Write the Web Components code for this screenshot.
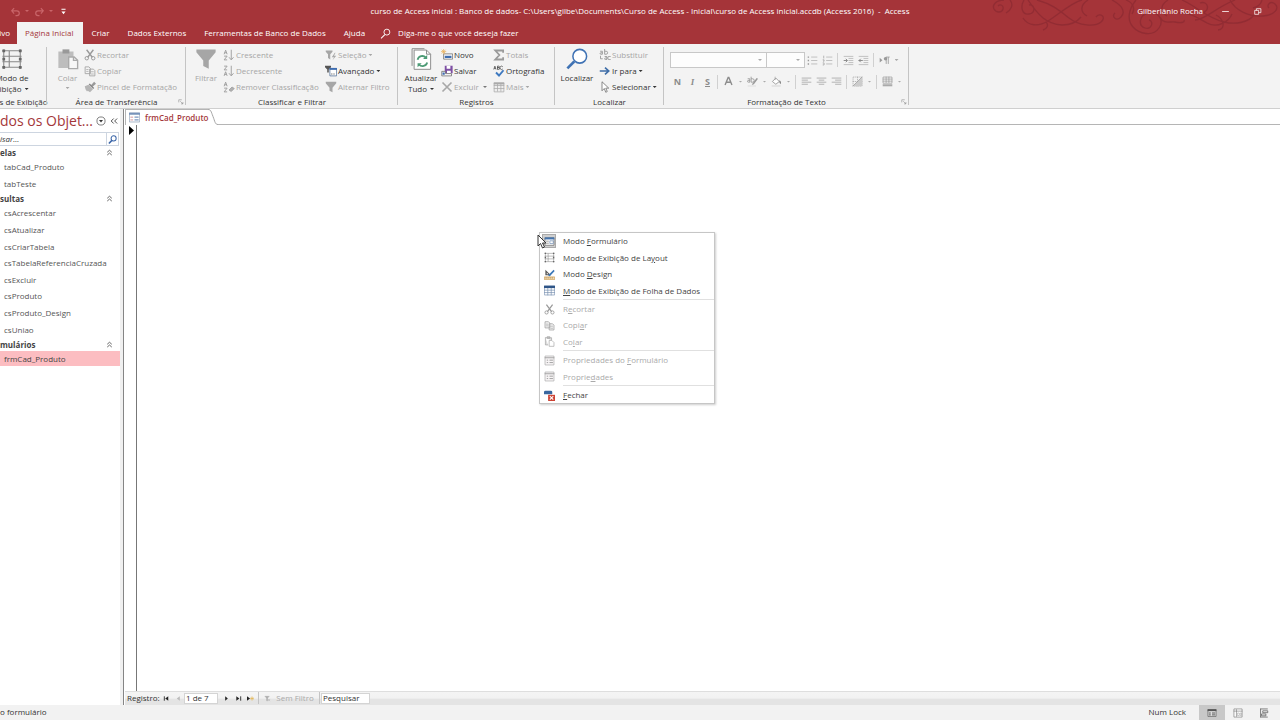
<!DOCTYPE html>
<html lang="pt-BR">
<head>
<meta charset="utf-8">
<title>Access</title>
<style>
html,body{margin:0;height:100%}
body{font:8px/12px "Open Sans","Noto Sans",sans-serif;color:#333;overflow:hidden;background:#fff}
</style>
</head>
<body>
<access-app></access-app>
<script>
const ICONS = {
 undo:'<path d="M3 7h7a3 3 0 0 1 0 7H8M6 3 2.500 7 6 11" fill="none" stroke="#c9656a" stroke-width="1.700"/>',
 redo:'<path d="M13 7H6a3 3 0 0 0 0 7h2M10 3l3.500 4L10 11" fill="none" stroke="#c9656a" stroke-width="1.700"/>',
 custom:'<path d="M5 4h6v1.500H5zM5 8h6l-3 4z" fill="#fff"/>',
 minimize:'<path d="M2 8h12" stroke="#fff" stroke-width="1.400"/>',
 restore:'<path d="M3 6h7v7H3zM6 6V3h8v7h-4" fill="none" stroke="#fff" stroke-width="1.300"/>',
 lens:'<circle cx="10" cy="6" r="4.300" fill="none" stroke="currentColor" stroke-width="1.300"/><path d="M7 9.500 1.500 15" stroke="currentColor" stroke-width="1.500"/>',
 lensbold:'<circle cx="10" cy="6" r="4.500" fill="none" stroke="currentColor" stroke-width="1.800"/><path d="M7 9.500 1.500 15" stroke="currentColor" stroke-width="2.800"/>',
 layout:'<path d="M2 1v14M14 1v14M1 2h14M1 6h14M1 10h14M1 14h14M6 2v12" fill="none" stroke="#888" stroke-width=".8"/><path d="M1 1h2v2H1zM13 1h2v2h-2zM1 13h2v2H1zM13 13h2v2h-2zM1 7h2v2H1zM13 7h2v2h-2z" fill="#666"/>',
 paste:'<path d="M1 2.500h11V7H9v7.500H1z" fill="#bdbdbd"/><path d="M4 1h5v3H4z" fill="#999"/><path d="M8.500 6.500h4l2.500 2.500v6H8.500z" fill="#f7f7f7" stroke="#aaa"/><path d="M12 6.500V9h3" fill="none" stroke="#aaa"/>',
 cut:'<path d="M3.500 1 11 11M12.500 1 5 11" stroke="#999" stroke-width="1.800"/><circle cx="3.700" cy="12.300" r="2.300" fill="none" stroke="#999" stroke-width="1.300"/><circle cx="12.300" cy="12.300" r="2.300" fill="none" stroke="#999" stroke-width="1.300"/>',
 copy:'<path d="M1.500 2.500h5l2 2v7h-7zM7.500 5.500h5l2 2v7h-7z" fill="#f4f4f4" stroke="#a5a5a5" stroke-width="1.200"/><path d="M3 6h3M3 8.500h3M9 9h4M9 12h4" stroke="#a5a5a5"/>',
 brush:'<path d="m9 6 4.500-5 2.500 2.500-5 4.500z" fill="#999"/><path d="m1 7 5-2 6 6-4 4-3-2-1 1-2-3z" fill="#b5b5b5"/><path d="m7 4 6 6" stroke="#888" stroke-width="2"/>',
 filter:'<path d="M1 1h14v2L10 9v6l-4-2V9L1 3z" fill="#a6a6a6"/>',
 asc:'<g stroke="#a0a0a0" fill="none" stroke-width="1.300"><path d="m1.500 7 2-5.500L5.500 7M2 5h3M1.500 9.500h4l-4 5h4M11 1v13M8 11l3 3.500 3-3.500"/></g>',
 desc:'<g stroke="#a0a0a0" fill="none" stroke-width="1.300"><path d="M1.500 1.500h4l-4 5h4M1.500 14.500l2-5.500 2 5.500M2 12.500h3M11 1v13M8 11l3 3.500 3-3.500"/></g>',
 clearsort:'<g stroke="#a0a0a0" fill="none" stroke-width="1.300"><path d="m1.500 7 2-5.500L5.500 7M2 5h3M1.500 9.500h4l-4 5h4"/></g><path d="m8 12 4-4 3 2-4 4z" fill="#b0b0b0" stroke="#999"/>',
 selfilter:'<path d="M1 2h9v1.500L7 7v7l-3-2V7L1 3.500z" fill="#a6a6a6"/><path d="m13 5-4 6h3l-2 4 5-6h-3l2-4z" fill="#aaa"/>',
 advanced:'<path d="M0 1h8v2L5 6v4H3V6L0 3z" fill="#555"/><path d="M6.500 4.500h9v10h-9z" fill="#fff" stroke="#4c6a91"/><path d="M6 4h10v2.500H6z" fill="#3e6db0"/><path d="M8 12h6" stroke="#555" stroke-dasharray="2 1"/>',
 refresh:'<path d="M3 1.500h9l3 3v11H3z" fill="#fff" stroke="#8a8a8a" stroke-width=".7"/><path d="M1.500 13V.5h9M12 1.500v3h3" fill="none" stroke="#8a8a8a" stroke-width=".7"/><path d="M5.500 8.500a3.500 3.500 0 0 1 6-1.500M12.500 10.500a3.500 3.500 0 0 1-6 1.500" fill="none" stroke="#4d9b76" stroke-width="1.300"/><path d="M12.500 5v3h-3zM5.500 14v-3h3z" fill="#4d9b76"/>',
 novo:'<path d="M3.500 6.500h12v7h-12z" fill="#fff" stroke="#666"/><path d="M5 9h9v3H5z" fill="#3e6db0"/><path d="M3.500 0v7M0 3.500h7M1 1l5 5M6 1 1 6" stroke="#e8b25b"/>',
 save:'<path d="M5 1h10.500v10H5z" fill="#7d4fa3"/><path d="M7.500 1h5v4h-5zM8 7.500h5V11H8z" fill="#fff"/><path d="M1 8.500h5v3h8v3H1z" fill="#fff" stroke="#666"/><path d="M2 10h3v3H2z" fill="#3e6db0"/>',
 del:'<path d="m2 2 12 12M14 2 2 14" stroke="#a8a8a8" stroke-width="2.200"/>',
 sigma:'<path d="M13.500 5V2H3l5.500 6L3 14h10.500v-3" fill="none" stroke="#9a9a9a" stroke-width="2.400"/>',
 spell:'<g fill="none" stroke="#444"><path d="m1 6 1.500-4.500L4 6M1.500 4.500h2M6 1.500V6h1.500a1 1 0 0 0 0-2.500H6h1.500a1 1 0 0 0 0-2H6M13 2.300A2.200 2.200 0 1 0 13 5.300"/></g><path d="m4 10 4 4 6-7" fill="none" stroke="#3e79c0" stroke-width="2.500"/>',
 more:'<path d="M1.500 2.500h13v12h-13zM1 6h14M1 10h14M6 3v11M10.500 3v11" fill="#eee" stroke="#aaa"/><path d="M1 2h14v2.500H1z" fill="#aaa"/>',
 find:'<circle cx="10" cy="6" r="5" fill="#fff" stroke="#3f72b4" stroke-width="1.100"/><path d="m6 9.800-5 5" stroke="#3f72b4" stroke-width="1.900"/>',
 replace:'<g fill="none" stroke="#999" stroke-width="1.200"><path d="M1.500 3h3v4h-2a1 1 0 0 1 0-2h2M7.500 0v7h2a1.500 1.500 0 0 0 0-4h-2M7.500 10h3v4h-2a1 1 0 0 1 0-2h2M15.500 10h-2a2 2 0 0 0 0 4h2M2 9v4h3"/></g>',
 goto:'<path d="M1 8h11M8 3.500 13 8l-5 4.500" fill="none" stroke="#3f6ea8" stroke-width="2.200"/>',
 pointer:'<path d="M4 1v12l3-3 2 5 2-1-2-4.500h4z" fill="#fff" stroke="#666"/>',
 bullets:'<path d="M6 3h9M6 8h9M6 13h9" stroke="#aaa"/><path d="M1 2h2v2H1zM1 7h2v2H1zM1 12h2v2H1z" fill="#999"/>',
 numbers:'<path d="M6 3h9M6 8h9M6 13h9" stroke="#aaa"/><path d="M2.500 1v4M1 7h2v2H1.500M1 11.500h2v3H1" fill="none" stroke="#999"/>',
 indent:'<path d="M1 2h14M8 5h7M8 8h7M8 11h7M1 14h14" stroke="#aaa"/><path d="M1 8h5M4 5.500 6.500 8 4 10.500" fill="none" stroke="#888" stroke-width="1.400"/>',
 outdent:'<path d="M1 2h14M8 5h7M8 8h7M8 11h7M1 14h14" stroke="#aaa"/><path d="M1 8h6M4 5.500 1.500 8 4 10.500" fill="none" stroke="#888" stroke-width="1.400"/>',
 para:'<path d="M1 4v7l4-3.500z" fill="#999"/><path d="M10.500 13V3M13.500 13V3M15.500 3H10" fill="none" stroke="#999" stroke-width="1.200"/><circle cx="9.500" cy="5.500" r="2.500" fill="#999"/>',
 fontcolor:'<path d="m3 13 4.500-11h1L13 13M5 9h6" fill="none" stroke="#8c8c8c" stroke-width="2"/>',
 highlight:'<path d="M1 4h3v5H2a1 1 0 0 1 0-2.500h2M6 1v8h2a1.500 1.500 0 0 0 0-5H6" fill="none" stroke="#999" stroke-width="1.300"/><path d="m8 11 6-8 2 1-6 8-3 1z" fill="#999"/><path d="M1 13.500h12v2H1z" fill="#e4e4e4"/>',
 fill:'<path d="m2 8 5-5 5 5-5 4z" fill="#fff" stroke="#999" stroke-width="1.300"/><path d="M6 1v5" stroke="#999"/><path d="M12 6c3 1 3 4 2 6l-2-3z" fill="#888"/><path d="M1 13.500h13v2H1z" fill="#dcdcdc"/>',
 left:'<path d="M1 3h14M1 6h9M1 9h14M1 12h9" stroke="#a5a5a5" stroke-width="1.200"/>',
 center:'<path d="M1 3h14M4 6h8M1 9h14M4 12h8" stroke="#a5a5a5" stroke-width="1.200"/>',
 right:'<path d="M1 3h14M6 6h9M1 9h14M6 12h9" stroke="#a5a5a5" stroke-width="1.200"/>',
 grid:'<path d="M1.500 1.500h13v13h-13zM1 8h14M8 1v14" fill="none" stroke="#a5a5a5" stroke-dasharray="2 1"/><path d="M1 15 15 1v14z" fill="#ccc"/><path d="M1 15 15 1" stroke="#999"/>',
 altrows:'<path d="M1.500 1.500h13v9h-13zM1 4.500h14M1 7.500h14M6 1v9M10 1v9" fill="none" stroke="#999"/><path d="M1 12h14v3H1z" fill="#aaa"/>',
 launcher:'<path d="M2 9V2h8M6 6l7 7M13 8v5H8" fill="none" stroke="currentColor" stroke-width="1.500"/>',
 circle:'<circle cx="8" cy="8" r="6.500" fill="none" stroke="#555" stroke-width="1.200"/><path d="M4.800 6.500h6.400L8 10.500z" fill="#333"/>',
 collapse:'<path d="m7.500 4-4 4 4 4M13 4 9 8l4 4" fill="none" stroke="#444" stroke-width="1.500"/>',
 up:'<path d="M4 7.500 8 4l4 3.500M4 12.500 8 9l4 3.500" fill="none" stroke="#555" stroke-width="1.600"/>',
 form:'<path d="M.5 1.500h15v13H.5z" fill="#fff" stroke="#8698b0"/><path d="M0 1h16v3H0z" fill="#7793ba"/><path d="M2 7.500h4M2 11.500h4" stroke="#d08a92" stroke-width="1.300"/><path d="M8 6.500h6v2H8zM8 10.500h6v2H8z" fill="#7c98c0"/>',
 formview:'<path d="M1.500 2.500h13v11h-13z" fill="#fff" stroke="#666"/><path d="M1 2h14v3H1z" fill="#4474ae"/><path d="M3 7.500h4M3 10.500h4" stroke="#777"/><path d="M8.500 7h5v4h-5z" fill="none" stroke="#6d8bb2"/>',
 design:'<path d="M2 1v8h8z" fill="#555"/><path d="M4 5v2.500h2.500z" fill="#fff"/><path d="m6 9 8-8 1.500 2L8 11z" fill="#3b77b8"/><path d="M.5 11.500h15v4H.5z" fill="#f3ddb5" stroke="#c99a55"/><path d="M3 12v2M6 12v2M9 12v2M12 12v2" stroke="#a67835"/>',
 sheet:'<path d="M.5 1.500h15v13H.5zM0 7.500h16M0 11h16M5.500 4v11M10.500 4v11" fill="#fff" stroke="#7890b0"/><path d="M0 1h16v3.500H0z" fill="#2e5587"/>',
 props:'<path d="M1.500 1.500h13v13h-13z" fill="#f8f5f6" stroke="#aaa"/><path d="M1 4h14M4 7.500h2M8 7.500h5M4 11h2M8 11h5" stroke="#999" stroke-width="1.300"/>',
 pastesm:'<path d="M2 2.500h9V6M2 2v11h4M4.500 1h4v2.500h-4z" fill="#ddd" stroke="#a5a5a5"/><path d="M7.500 6.500h4l3 3v5.500h-7z" fill="#fff" stroke="#a5a5a5"/>',
 close:'<path d="M0 3q0-2 2-2h8q2 0 2 2v3H0z" fill="#3a679f"/><path d="M6 7h10v9H6z" fill="#cd4334"/><path d="m8.500 9 5 5M13.500 9l-5 5" stroke="#fff" stroke-width="1.600"/>',
 first:'<path d="M3 3v10" stroke="#222" stroke-width="2"/><path d="M12 3v10L5 8z" fill="#222"/>',
 prev:'<path d="M11 3v10L4 8z" fill="#bbb"/>',
 next:'<path d="M5 3v10l6-5z" fill="#222"/>',
 last:'<path d="M13 3v10" stroke="#222" stroke-width="2"/><path d="M3 3v10l7-5z" fill="#222"/>',
 newrec:'<path d="M0 3v10l7-5z" fill="#222"/><path d="M11.500 3v10M7 8h9M8.500 5l6 6M14.500 5l-6 6" stroke="#e2b24b" stroke-width="1.300"/>',
 nofilter:'<path d="M2 3h10L8 7v6H6V7zM9 9l5 5M14 9l-5 5" fill="#aaa" stroke="#aaa"/>',
 stForm:'<path d="M1.500 2.500h13v11h-13z" fill="#ddd" stroke="#555"/><path d="M1 2h14v3H1z" fill="#555"/><path d="M3 8h3M3 11h3M8 8h5M8 11h5" stroke="#555" stroke-width="1.500"/>',
 stSheet:'<path d="M1.500 1.500h13v13h-13zM5.500 2v12M1 5h14" fill="#fff" stroke="#777"/><path d="M7 8h3v4H7zM11.500 8h2v4h-2z" fill="none" stroke="#aaa"/>',
 stLayout:'<path d="M2 1.500h12M2 14.500h12M2.500 1v14M6 4.500h8v3H6zM4 9.500h7v3H4z" fill="none" stroke="#666" stroke-width="1.300"/>'
};
const define = (name, html, setup) => {
  const template = document.createElement('template');
  template.innerHTML = html;
  customElements.define(name, class extends HTMLElement {
    constructor() {
      super();
      this.attachShadow({mode: 'open'}).append(template.content.cloneNode(true));
    }
    connectedCallback() { if (setup) setup(this, this.shadowRoot); }
  });
};
const RESET = ':host,*{box-sizing:border-box}button,input,select{font:inherit;color:inherit;margin:0;padding:0;border:0;background:none;border-radius:0;outline:0}button{display:flex;align-items:center;justify-content:center;white-space:nowrap}';

define('ui-icon', `<style>:host{display:block;flex:none;width:var(--size,12px);height:var(--size,12px)}svg{display:block;width:100%;height:100%}</style><svg viewBox="0 0 16 16" aria-hidden="true"></svg>`,
  (el, root) => { root.querySelector('svg').innerHTML = ICONS[el.getAttribute('name')]; });

define('menu-arrow', `<style>:host{display:block;flex:none;width:4px;height:2px;background:currentColor;clip-path:polygon(0 0,100% 0,50% 100%)}</style>`);

/* Ribbon button: a wide row by default, icon over text with size="big" */
define('ribbon-button', `<style>${RESET}
:host{display:block}
button{height:16px;gap:1px;justify-content:flex-start}
button:disabled{color:#a6a6a6}
:host([size=big]) button{flex-direction:column;height:48px;width:100%;gap:0;line-height:11px;padding-top:1px;justify-content:flex-start}
:host([size=big]) ui-icon{--size:22px;margin-bottom:2px}
.label{display:flex;align-items:center;gap:2px}
:host([size=big]) .label{flex-direction:column;gap:0}
:host([size=big]) .lines{display:block}
:host([size=big]) menu-arrow{margin-top:4px}
</style><button type="button"><ui-icon></ui-icon><span class="label"><span class="lines"><slot></slot></span></span></button>`,
  (el, root) => {
    const icon = root.querySelector('ui-icon');
    icon.setAttribute('name', el.getAttribute('icon'));
    icon.shadowRoot.querySelector('svg').innerHTML = ICONS[el.getAttribute('icon')];
    root.querySelector('button').disabled = el.hasAttribute('disabled');
    if (el.hasAttribute('menu')) root.querySelector('.label').append(document.createElement('menu-arrow'));
  });

define('ribbon-group', `<style>${RESET}
:host{display:flex;flex-direction:column;flex:none;position:relative;padding-top:3px}
:host::after{content:"";position:absolute;right:0;top:3px;bottom:3px;width:1px;background:#c4c4c4}
.body{display:flex;height:48px}
footer{display:flex;justify-content:center;align-items:center;height:13px;white-space:nowrap}
button{position:absolute;right:2px;bottom:3px;color:#888}
ui-icon{--size:6px}
</style><div class="body"><slot></slot></div><footer><span></span></footer>`,
  (el, root) => {
    root.querySelector('footer span').textContent = el.getAttribute('label');
    if (el.hasAttribute('launcher')) root.querySelector('footer').insertAdjacentHTML('beforeend', '<button type="button" aria-label="Mais opções"><ui-icon name="launcher"></ui-icon></button>');
  });

define('tool-button', `<style>${RESET}:host{display:flex;flex:none}button{width:15px;height:16px;color:#8c8c8c;font-weight:700;font-size:9px}button.drop{width:9px;color:#aaa}ui-icon{--size:11px}</style>
<button type="button"><slot></slot></button>`,
  (el, root) => {
    const b = root.querySelector('button'), icon = el.getAttribute('icon');
    b.setAttribute('aria-label', el.getAttribute('label') || icon || '');
    if (icon) b.innerHTML = `<ui-icon name="${icon}"></ui-icon>`;
    if (el.hasAttribute('menu')) root.append(Object.assign(document.createElement('button'), {className: 'drop', type: 'button', innerHTML: '<menu-arrow></menu-arrow>'}));
  });

define('format-tools', `<style>${RESET}
:host{display:flex;flex-direction:column;gap:6px;padding:5px 0 0 6px}
.row{display:flex;height:16px;align-items:center}
.row+.row{height:15px}
label{display:flex;align-items:center;width:97px;height:16px;background:#fdfdfd;border:1px solid #c8c8c8;color:#aaa;padding-right:4px}
label+label{width:39px;margin-left:-1px}
select{appearance:none;flex:1;min-width:0;height:14px}
hr{width:1px;height:14px;margin:0 3px 0 2px;border:0;background:#d0d0d0}
i{font-family:"Liberation Serif",serif}
</style>
<div class="row"><label><select aria-label="Fonte"></select><menu-arrow></menu-arrow></label><label><select aria-label="Tamanho da fonte"></select><menu-arrow></menu-arrow></label>
<tool-button icon="bullets"></tool-button><tool-button icon="numbers"></tool-button><hr><tool-button icon="indent"></tool-button><tool-button icon="outdent"></tool-button><hr><tool-button icon="para" menu></tool-button></div>
<div class="row"><tool-button label="Negrito">N</tool-button><tool-button label="Itálico"><i>I</i></tool-button><tool-button label="Sublinhado"><u>S</u></tool-button><hr><tool-button icon="fontcolor" menu></tool-button><tool-button icon="highlight" menu></tool-button><tool-button icon="fill" menu></tool-button><hr><tool-button icon="left"></tool-button><tool-button icon="center"></tool-button><tool-button icon="right"></tool-button><hr><tool-button icon="grid" menu></tool-button><hr><tool-button icon="altrows" menu></tool-button></div>`);

define('title-bar', `<style>${RESET}
:host{display:grid;grid-template-columns:1fr auto 1fr;align-items:center;height:22px;color:#fff}
.quick,.window{display:flex;align-items:center}
.quick{padding-left:8px}
.quick button{height:14px;width:14px}
.quick .drop{width:10px;color:#c9656a}
.window{justify-content:flex-end;padding-right:7px}
.window button{width:32px;height:22px}
ui-icon{--size:11px}
h1{font:inherit;margin:0;white-space:pre}
.window span{margin-right:6px}
.window ui-icon{--size:9px}
</style>
<div class="quick"><button aria-label="Desfazer"><ui-icon name="undo"></ui-icon></button><button class="drop" aria-label="Lista desfazer"><menu-arrow></menu-arrow></button><button aria-label="Refazer"><ui-icon name="redo"></ui-icon></button><button class="drop" aria-label="Lista refazer"><menu-arrow></menu-arrow></button><button aria-label="Personalizar"><ui-icon name="custom"></ui-icon></button></div>
<h1>curso de Access inicial : Banco de dados- C:\\Users\\gilbe\\Documents\\Curso de Access - Inicial\\curso de Access inicial.accdb (Access 2016)  -  Access</h1>
<div class="window"><span>Gilberlânio Rocha</span><button aria-label="Minimizar"><ui-icon name="minimize"></ui-icon></button><button aria-label="Restaurar"><ui-icon name="restore"></ui-icon></button></div>`);

define('ribbon-tabs', `<style>${RESET}
:host{display:flex;height:22px;color:#fff}
nav{display:flex}
button{height:22px;padding:0 9px}
.file{width:17px;padding:0 7px 0 0;justify-content:flex-end}
[aria-selected=true]{background:#f3f3f3;color:#a4373a;padding:0 9px 0 8px}
label{display:flex;align-items:center;gap:7px;margin-left:6px;height:22px}
input{width:130px}
input::placeholder{color:#fff;opacity:1}
ui-icon{--size:11px}
</style>
<nav role="tablist"><button role="tab" class="file">ivo</button><button role="tab" aria-selected="true">Página Inicial</button><button role="tab">Criar</button><button role="tab">Dados Externos</button><button role="tab">Ferramentas de Banco de Dados</button><button role="tab">Ajuda</button></nav>
<label><ui-icon name="lens"></ui-icon><input aria-label="Diga-me" placeholder="Diga-me o que você deseja fazer"></label>`);

define('app-header', `<style>
:host{display:block;position:relative;background:#a53439}
.art{position:absolute;right:0;top:0;width:290px;height:38px;opacity:.75}
.front{position:relative}
</style>
<svg class="art" viewBox="0 0 290 38" fill="none" stroke="#8c2a32" stroke-width="1.300" aria-hidden="true">
<path d="M14 0c-8 0-12 5-10 9s8 4 9 0-3-5-5-3M20 0c4 5 1 10-4 13M34 0c-4 7-2 15 5 14s6-10 0-9M38 0c10 15 18 24 34 25 9 0 15-3 19-8M33 18c5 8 15 9 25 3S82 2 92 0M53 30c4-1 6-5 3-8M47 0c15 4 22 10 32 18s26 9 32 4-1-10-5-5M98 0c-8 5-8 12-1 16M122 0c10 5 14 12 9 17s-10-1-6-4M136 0c6 2 10 8 6 14"/>
<path d="M146 0c-8 10-9 20-3 27s20 10 26 1-2-17-11-15-10 13-3 15 9-7 4-8M170 17c4 8 10 4 15 5s10 1 9-2M178 0c-8 5-8 12-1 16M186 13c14-1 20 4 31 10s22-2 25-9M192 0c14 6 25 18 42 22 12 3 25 0 30-7M205 20c10 0 20-12 40-20M210 3c8-3 11 8 2 10M226 15c8 4 10 14 2 15M240 0c5 10 18 17 33 16 12-1 17-8 12-12s-9 2-6 4M272 0c-1 4-5 7-9 8"/>
</svg><div class="front"><slot></slot></div>`);

define('nav-section', `<style>${RESET}
:host{display:block}
h3{display:flex;justify-content:space-between;align-items:center;height:13px;margin:0;padding-right:6px;font-size:8px;font-weight:700;color:#444}
h3 button{height:13px}
ui-icon{--size:9px}
ul{display:grid;grid-auto-rows:1fr;height:var(--list);margin:0;padding:0;list-style:none}
li{display:flex;align-items:center;padding-left:4px;color:#555}
li.on{background:#fcbdc1;color:#444}
</style><h3><span></span><button aria-label="Recolher grupo"><ui-icon name="up"></ui-icon></button></h3><ul></ul>`,
  (el, root) => {
    root.querySelector('span').textContent = el.getAttribute('heading');
    root.querySelector('ul').innerHTML = el.getAttribute('items').split(' ').map(t => `<li class="${el.hasAttribute('selected') ? 'on' : ''}">${t}</li>`).join('');
  });

define('nav-pane', `<style>${RESET}
:host{display:flex;flex-direction:column;width:124px;flex:none;padding-right:3px;border-right:1px solid #858585;background:linear-gradient(#f0f0f0,#f0f0f0) right/3px 100% no-repeat #fff}
header{display:flex;align-items:center;height:23px;color:#a4373a}
h2{flex:none;width:94px;margin:0;font-size:14px;font-weight:400;line-height:22px;white-space:nowrap}
header button{height:16px;flex:1}
header ui-icon{--size:10px}
form{display:flex;height:14px;border:1px solid #cdd5e0;border-left:0;margin:0 1px 0 0}
input{flex:1;min-width:0;font-style:italic}
input::placeholder{color:#333;opacity:1}
form button{width:12px;color:#3a65a8;border-left:1px solid #cdd5e0}
form ui-icon{--size:9px}
</style>
<header><h2>dos os Objet...</h2><button aria-label="Filtrar lista"><ui-icon name="circle"></ui-icon></button><button aria-label="Recolher painel"><ui-icon name="collapse"></ui-icon></button></header>
<form><input aria-label="Pesquisar objetos" placeholder="isar..."><button type="button" aria-label="Pesquisar"><ui-icon name="lensbold"></ui-icon></button></form>
<nav-section heading="elas" style="--list:33px" items="tabCad_Produto tabTeste"></nav-section>
<nav-section heading="sultas" style="--list:133px" items="csAcrescentar csAtualizar csCriarTabela csTabelaReferenciaCruzada csExcluir csProduto csProduto_Design csUniao"></nav-section>
<nav-section heading="mulários" style="--list:15px" selected items="frmCad_Produto"></nav-section>`);

define('document-tabs', `<style>${RESET}
:host{display:flex;height:16px}
button{height:16px;gap:5px;padding-left:3px;border-top:1px solid #b5b5b5;border-left:1px solid #b5b5b5;font-weight:600;color:#a4373a;background:#fff}
svg{display:block;width:10px;height:16px}
.rest{flex:1;border-bottom:1px solid #b5b5b5}
ui-icon{--size:11px}
</style><button role="tab"><ui-icon name="form"></ui-icon><slot></slot></button><svg viewBox="0 0 10 16" aria-hidden="true"><path d="M0 .5c3 0 3 2 5 7s2 8 5 8" fill="none" stroke="#a5a5a5"/></svg><div class="rest"></div>`);

define('record-nav', `<style>${RESET}
:host{display:flex;align-items:center;height:14px;background:linear-gradient(#dedede 1px,#f4f4f4 1px,#f2f2f2 50%,#e4e4e4 60%);padding-left:2px;color:#333}
.step{width:12px;height:12px}
ui-icon{--size:7px}
input{height:11px;background:#fff;border:1px solid #d4d4d4;padding-left:1px}
.pos{width:34px;margin-right:2px}
.find{width:49px}
.filter{gap:5px;width:62px;color:#aaa;border-left:1px solid #c4c4c4;border-right:1px solid #c4c4c4;height:12px;margin:0 1px 0 2px}
label{width:33px}
</style><label for="pos">Registro:</label><button class="step" aria-label="Primeiro"><ui-icon name="first"></ui-icon></button><button class="step" aria-label="Anterior"><ui-icon name="prev"></ui-icon></button><input class="pos" id="pos" value="1 de 7"><button class="step" aria-label="Próximo"><ui-icon name="next"></ui-icon></button><button class="step" aria-label="Último"><ui-icon name="last"></ui-icon></button><button class="step" aria-label="Novo registro"><ui-icon name="newrec"></ui-icon></button><button class="filter" disabled><ui-icon name="nofilter"></ui-icon>Sem Filtro</button><input class="find" aria-label="Pesquisar registro" value="Pesquisar">`);

define('menu-item', `<style>${RESET}
:host{display:block}
button{width:100%;height:100%;justify-content:flex-start;padding-left:2px;gap:7px;color:#444}
:host([disabled]) button{color:#aaa}
.box{display:flex;align-items:center;justify-content:center;width:14px;height:14px}
:host([current]) .box{background:#cfcfcf;box-shadow:0 0 0 1px #aaa inset}
ui-icon{--size:11px}
</style><button role="menuitem"><span class="box"></span><span><slot></slot></span></button>`,
  (el, root) => {
    root.querySelector('.box').innerHTML = `<ui-icon name="${el.getAttribute('icon')}"></ui-icon>`;
    root.querySelector('button').disabled = el.hasAttribute('disabled');
  });

define('context-menu', `<style>${RESET}
:host{display:block;width:176px;background:#fff;border:1px solid #c6c6c6;box-shadow:1px 1px 2px #0003}
section{display:grid;grid-auto-rows:1fr}
hr{height:1px;margin:0 0 1px 23px;border:0;background:#e0e0e0}
.four{height:66px}.three{height:49px}.two{height:33px}.one{height:16px}
svg{position:absolute;left:-3px;top:1px;width:10px;height:15px}
</style>
<section class="four"><menu-item icon="formview" current>Modo <u>F</u>ormulário</menu-item><menu-item icon="layout">Modo de Exibição de La<u>y</u>out</menu-item><menu-item icon="design">Modo <u>D</u>esign</menu-item><menu-item icon="sheet"><u>M</u>odo de Exibição de Folha de Dados</menu-item></section><hr>
<section class="three"><menu-item icon="cut" disabled>R<u>e</u>cortar</menu-item><menu-item icon="copy" disabled>Copi<u>a</u>r</menu-item><menu-item icon="pastesm" disabled>Co<u>l</u>ar</menu-item></section><hr>
<section class="two"><menu-item icon="props" disabled>Propriedades do <u>F</u>ormulário</menu-item><menu-item icon="props" disabled>Proprie<u>d</u>ades</menu-item></section><hr>
<section class="one"><menu-item icon="close"><u>F</u>echar</menu-item></section>
<svg viewBox="0 0 10 15" aria-hidden="true"><path d="M1 1v11l2.500-2.500L5.500 14l2-1-2-4H9z" fill="#fff" stroke="#333"/></svg>`);

define('form-document', `<style>
:host{display:flex;flex-direction:column;flex:1;min-width:0;position:relative;padding-left:1px}
.canvas{display:flex;flex:1}
.selector{width:12px;border-right:1px solid #777;padding:1px 0 0 4px;box-sizing:border-box}
.selector svg{display:block;width:5px;height:9px}
context-menu{position:absolute;left:415px;top:123px}
</style>
<document-tabs>frmCad_Produto</document-tabs>
<div class="canvas"><div class="selector"><svg viewBox="0 0 5 9" aria-hidden="true"><path d="M0 0v9l5-4.500z"/></svg></div></div>
<record-nav></record-nav><context-menu></context-menu>`);

define('status-bar', `<style>${RESET}
:host{display:flex;align-items:center;height:15px;background:#f2f2f2;padding-right:3px;color:#333}
.msg,.key{line-height:13px;align-self:flex-start}
.msg{flex:1}
.key{margin-right:13px}
button{width:26px;height:15px}
.on{background:#c8c8c8}
ui-icon{--size:10px}
</style><span class="msg">o formulário</span><span class="key">Num Lock</span><button class="on" aria-label="Modo Formulário"><ui-icon name="stForm"></ui-icon></button><button aria-label="Folha de Dados"><ui-icon name="stSheet"></ui-icon></button><button aria-label="Layout"><ui-icon name="stLayout"></ui-icon></button>`);

define('access-app', `<style>
:host{display:flex;flex-direction:column;height:100vh}
.ribbon{display:flex;height:65px;box-sizing:border-box;background:#f3f3f3;border-bottom:1px solid #cfcfcf;flex:none}
.main{display:flex;flex:1;min-height:0}
.view{width:47px}.clip{width:139px}.sort{width:212px}.rec{width:157px}.find{width:109px}.text{width:245px}
.col{flex:none}
.mode{width:60px;margin-left:-18px}
.paste{width:31px;margin:0 1px 0 5px}
.filter{width:40px;margin-right:-3px}
.sortcol{width:102px}
.refresh{width:46px;margin-right:-3px}
.reccol{width:52px;position:relative}
.reccol>menu-arrow{position:absolute;right:6px;bottom:7px;color:#777}
ribbon-button menu-arrow{display:inline-block;margin:0 0 2px 3px}
.locate{width:44px}
ribbon-group{box-sizing:border-box}
</style>
<app-header><title-bar></title-bar><ribbon-tabs></ribbon-tabs></app-header>
<div class="ribbon">
<ribbon-group class="view" label="s de Exibição"><ribbon-button class="mode" size="big" icon="layout">Modo de<br>xibição<menu-arrow></menu-arrow></ribbon-button></ribbon-group>
<ribbon-group class="clip" label="Área de Transferência" launcher><ribbon-button class="paste" size="big" icon="paste" disabled menu>Colar</ribbon-button><div class="col"><ribbon-button icon="cut" disabled>Recortar</ribbon-button><ribbon-button icon="copy" disabled>Copiar</ribbon-button><ribbon-button icon="brush" disabled>Pincel de Formatação</ribbon-button></div></ribbon-group>
<ribbon-group class="sort" label="Classificar e Filtrar"><ribbon-button class="filter" size="big" icon="filter" disabled>Filtrar</ribbon-button><div class="col sortcol"><ribbon-button icon="asc" disabled>Crescente</ribbon-button><ribbon-button icon="desc" disabled>Decrescente</ribbon-button><ribbon-button icon="clearsort" disabled>Remover Classificação</ribbon-button></div><div class="col"><ribbon-button icon="selfilter" disabled menu>Seleção</ribbon-button><ribbon-button icon="advanced" menu>Avançado</ribbon-button><ribbon-button icon="filter" disabled>Alternar Filtro</ribbon-button></div></ribbon-group>
<ribbon-group class="rec" label="Registros"><ribbon-button class="refresh" size="big" icon="refresh">Atualizar<br>Tudo<menu-arrow></menu-arrow></ribbon-button><div class="col reccol"><ribbon-button icon="novo">Novo</ribbon-button><ribbon-button icon="save">Salvar</ribbon-button><ribbon-button icon="del" disabled>Excluir</ribbon-button><menu-arrow></menu-arrow></div><div class="col"><ribbon-button icon="sigma" disabled>Totais</ribbon-button><ribbon-button icon="spell">Ortografia</ribbon-button><ribbon-button icon="more" disabled menu>Mais</ribbon-button></div></ribbon-group>
<ribbon-group class="find" label="Localizar"><ribbon-button class="locate" size="big" icon="find">Localizar</ribbon-button><div class="col"><ribbon-button icon="replace" disabled>Substituir</ribbon-button><ribbon-button icon="goto" menu>Ir para</ribbon-button><ribbon-button icon="pointer" menu>Selecionar</ribbon-button></div></ribbon-group>
<ribbon-group class="text" label="Formatação de Texto" launcher><format-tools></format-tools></ribbon-group>
</div>
<div class="main"><nav-pane></nav-pane><form-document></form-document></div>
<status-bar></status-bar>`);
</script>
</body>
</html>
